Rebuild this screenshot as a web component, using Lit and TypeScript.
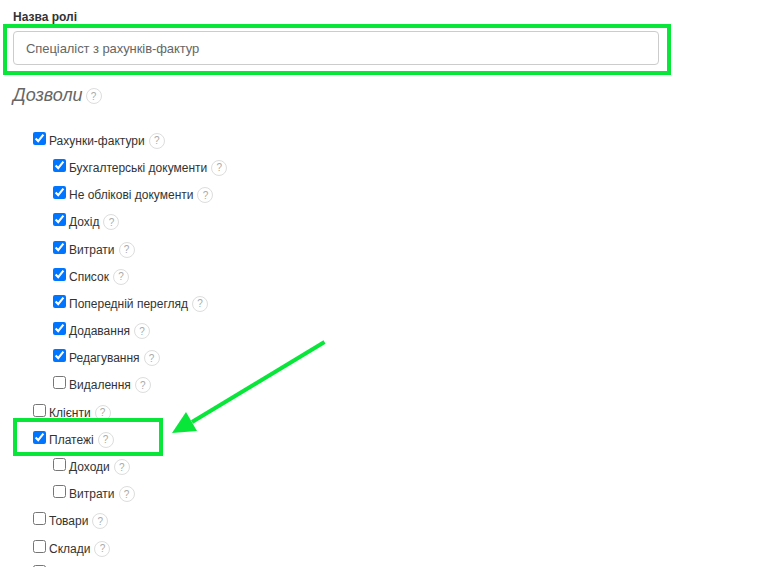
import { LitElement, html, css } from 'lit';
import { customElement } from 'lit/decorators.js';

interface Perm {
  label: string;
  checked: boolean;
  child?: boolean;
}

const PERMS: Perm[] = [
  { label: 'Рахунки-фактури', checked: true },
  { label: 'Бухгалтерські документи', checked: true, child: true },
  { label: 'Не облікові документи', checked: true, child: true },
  { label: 'Дохід', checked: true, child: true },
  { label: 'Витрати', checked: true, child: true },
  { label: 'Список', checked: true, child: true },
  { label: 'Попередній перегляд', checked: true, child: true },
  { label: 'Додавання', checked: true, child: true },
  { label: 'Редагування', checked: true, child: true },
  { label: 'Видалення', checked: false, child: true },
  { label: 'Клієнти', checked: false },
  { label: 'Платежі', checked: true },
  { label: 'Доходи', checked: false, child: true },
  { label: 'Витрати', checked: false, child: true },
  { label: 'Товари', checked: false },
  { label: 'Склади', checked: false },
];

@customElement('app-root')
export class AppRoot extends LitElement {
  static styles = css`
    :host {
      display: block;
      position: relative;
      height: 567px;
      overflow: hidden;
      background: #fff;
      font-family: 'Liberation Sans', Arial, sans-serif;
      color: #333;
    }

    .form {
      width: 646px;
      padding: 10px 0 0 13px;
    }

    .label {
      display: block;
      font-size: 12px;
      line-height: 15px;
      font-weight: bold;
      color: #333;
      margin-bottom: 6px;
    }

    .input {
      box-sizing: border-box;
      display: block;
      width: 100%;
      height: 34px;
      padding: 0 12px;
      border: 1px solid #ccc;
      border-radius: 4px;
      font: 13px 'Liberation Sans', Arial, sans-serif;
      letter-spacing: -0.07px;
      color: #666;
      background: #fff;
      outline: none;
    }

    .heading {
      display: flex;
      align-items: center;
      height: 24px;
      margin: 18px 0 20.2px;
      font-size: 18px;
      font-style: italic;
      color: #666;
    }

    .heading .help {
      margin-top: 2px;
      margin-left: 3px;
    }

    .list {
      padding-left: 20px;
    }

    .row {
      display: flex;
      align-items: center;
      height: 27.2px;
      font-size: 12px;
      color: #333;
    }

    .row.child {
      padding-left: 20px;
    }

    .row input {
      width: 13px;
      height: 13px;
      margin: -5px 3px 0 0;
      flex: none;
    }

    .row.cut input {
      margin-top: -8px;
    }

    .help {
      box-sizing: border-box;
      display: inline-flex;
      align-items: center;
      justify-content: center;
      flex: none;
      width: 16px;
      height: 16px;
      margin-left: 4px;
      border: 1px solid #ddd;
      border-radius: 50%;
      font-size: 10px;
      font-style: normal;
      color: #aaa;
      background: #fff;
    }

    .mark {
      position: absolute;
      box-sizing: border-box;
      border: 4px solid #08e63a;
      pointer-events: none;
    }

    .mark--name {
      left: 3px;
      top: 24px;
      width: 668px;
      height: 51px;
    }

    .mark--pay {
      left: 13px;
      top: 418px;
      width: 150px;
      height: 38px;
    }

    .arrow {
      position: absolute;
      left: 165px;
      top: 335px;
      pointer-events: none;
    }
  `;

  render() {
    return html`
      <div class="form">
        <label class="label">Назва ролі</label>
        <input class="input" type="text" .value=${'Спеціаліст з рахунків-фактур'} />
        <div class="heading">Дозволи<span class="help">?</span></div>
        <div class="list">
          ${PERMS.map(
            (p) => html`
              <div class="row ${p.child ? 'child' : ''}">
                <input type="checkbox" ?checked=${p.checked} />
                ${p.label}
                <span class="help">?</span>
              </div>
            `
          )}
          <div class="row cut"><input type="checkbox" /></div>
        </div>
      </div>
      <div class="mark mark--name"></div>
      <div class="mark mark--pay"></div>
      <svg class="arrow" width="165" height="105" viewBox="0 0 165 105">
        <line x1="159.500" y1="7" x2="27" y2="87" stroke="#08e63a" stroke-width="4" />
        <polygon points="7,98 21,77 32,96" fill="#08e63a" />
      </svg>
    `;
  }
}

declare global {
  interface HTMLElementTagNameMap {
    'app-root': AppRoot;
  }
}
